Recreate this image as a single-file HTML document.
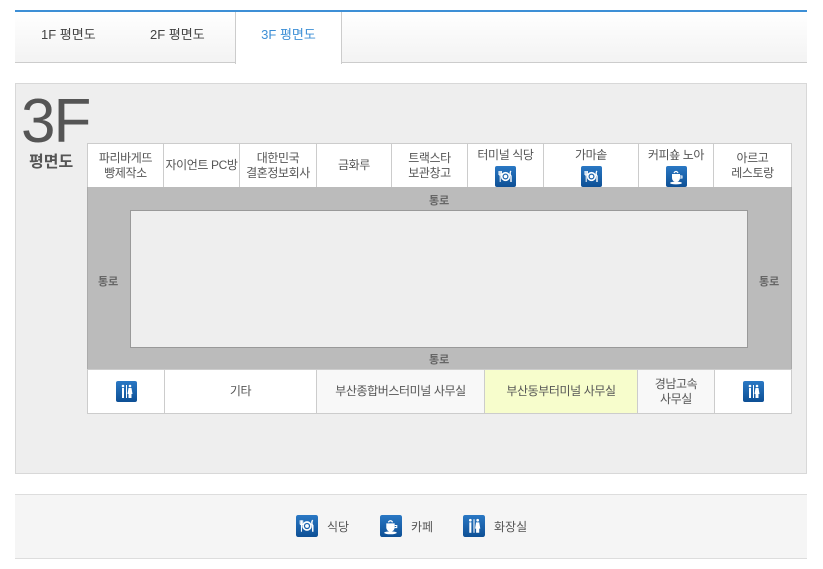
<!DOCTYPE html>
<html><head><meta charset="utf-8"><style>
*{margin:0;padding:0;box-sizing:border-box}
body{width:823px;height:569px;background:#fff;position:relative;font-family:"Liberation Sans","Noto Sans CJK KR",sans-serif;color:#555;overflow:hidden}
.abs{position:absolute}
.tabs{left:15px;top:10px;width:792px;height:53px;border-top:2px solid #3d8fd6;background:linear-gradient(#fff,#f3f3f3);border-bottom:1px solid #ccc}
.tab{position:absolute;top:0;height:51px;line-height:46px;font-size:13px;color:#444}
.tab.on{left:220px;width:107px;height:52px;background:#fff;border-left:1px solid #ccc;border-right:1px solid #ccc;color:#3d8fd6;text-align:center}
.panel{left:15px;top:83px;width:792px;height:391px;background:#eee;border:1px solid #d8d8d8}
.row{position:absolute;left:87px;width:705px;display:flex;background:#fff;border:1px solid #ccc}
.row div{border-right:1px solid #ccc;display:flex;flex-direction:column;align-items:center;justify-content:center;font-size:12px;color:#555;text-align:center;line-height:15px;white-space:nowrap;letter-spacing:-0.4px}
.row div:last-child{border-right:none}
.ic{width:21px;height:21px;display:block}
.lbl{font-size:11px;color:#666;font-weight:bold}
</style></head><body>
<svg width="0" height="0" style="position:absolute">
<defs>
<linearGradient id="g" x1="0" y1="0" x2="0" y2="1"><stop offset="0" stop-color="#2a78c4"/><stop offset="1" stop-color="#0d4f95"/></linearGradient>
<symbol id="food" viewBox="0 0 21 21"><rect width="21" height="21" rx="2" fill="url(#g)"/><path d="M4 5v4M5.2 5v11M6.4 5v4M4 9h2.4" stroke="#fff" stroke-width="1" fill="none"/><circle cx="10.5" cy="10.5" r="3.8" fill="none" stroke="#fff" stroke-width="1.6"/><circle cx="10.5" cy="10.5" r="1.8" fill="#fff"/><path d="M16 5c-1.2 1-1.2 4 0 5v6" stroke="#fff" stroke-width="1.4" fill="none"/></symbol>
<symbol id="cafe" viewBox="0 0 21 21"><rect width="21" height="21" rx="2" fill="url(#g)"/><path d="M6 8h8v4a4 4 0 0 1-8 0z" fill="#fff"/><path d="M14 10h2v2h-2" stroke="#fff" fill="none"/><ellipse cx="10" cy="17" rx="6" ry="1.4" fill="#fff"/><path d="M8 7c1-2 3-2 4 0" stroke="#fff" stroke-width="1.2" fill="none"/></symbol>
<symbol id="wc" viewBox="0 0 21 21"><rect width="21" height="21" rx="2" fill="url(#g)"/><circle cx="7" cy="5" r="1.3" fill="#fff"/><rect x="6" y="7" width="2" height="10" fill="#fff"/><rect x="10" y="4" width="1" height="13" fill="#fff"/><circle cx="14" cy="5" r="1.3" fill="#fff"/><path d="M12.5 7h3l1 6h-1v4h-3v-4h-1z" fill="#fff"/></symbol>
</defs></svg>

<div class="abs tabs">
 <div class="tab" style="left:26px">1F 평면도</div>
 <div class="tab" style="left:135px">2F 평면도</div>
 <div class="tab on">3F 평면도</div>
</div>

<div class="abs panel"></div>
<div class="abs" style="left:21px;top:89px;font-size:62px;color:#555;line-height:66px;letter-spacing:-2px">3F</div>
<div class="abs" style="left:29px;top:148px;font-size:16px;font-weight:bold;color:#555">평면도</div>

<div class="row" style="top:143px;height:45px">
 <div style="width:76px">파리바게뜨<br>빵제작소</div>
 <div style="width:76px">자이언트 PC방</div>
 <div style="width:77px">대한민국<br>결혼정보회사</div>
 <div style="width:75px">금화루</div>
 <div style="width:76px">트랙스타<br>보관창고</div>
 <div style="width:76px;justify-content:flex-start;padding-top:4px">터미널 식당<svg class="ic" style="margin-top:3px"><use href="#food"/></svg></div>
 <div style="width:95px;justify-content:flex-start;padding-top:4px">가마솥<svg class="ic" style="margin-top:3px"><use href="#food"/></svg></div>
 <div style="width:75px;justify-content:flex-start;padding-top:4px">커피숖 노아<svg class="ic" style="margin-top:3px"><use href="#cafe"/></svg></div>
 <div style="flex:1">아르고<br>레스토랑</div>
</div>

<div class="abs" style="left:87px;top:187px;width:705px;height:183px;background:#bbb;border-left:1px solid #aaa;border-right:1px solid #aaa"></div>
<div class="abs" style="left:130px;top:210px;width:618px;height:138px;background:#eee;border:1px solid #999"></div>
<div class="abs lbl" style="left:429px;top:192px">통로</div>
<div class="abs lbl" style="left:429px;top:351px">통로</div>
<div class="abs lbl" style="left:98px;top:273px">통로</div>
<div class="abs lbl" style="left:759px;top:273px">통로</div>

<div class="row" style="top:369px;height:45px">
 <div style="width:77px"><svg class="ic"><use href="#wc"/></svg></div>
 <div style="width:152px">기타</div>
 <div style="width:168px;background:#f8f8f8">부산종합버스터미널 사무실</div>
 <div style="width:153px;background:#f7fdcc">부산동부터미널 사무실</div>
 <div style="width:77px;background:#f8f8f8">경남고속<br>사무실</div>
 <div style="flex:1"><svg class="ic"><use href="#wc"/></svg></div>
</div>

<div class="abs" style="left:15px;top:494px;width:792px;height:65px;background:#f5f5f5;border-top:1px solid #ddd;border-bottom:1px solid #ddd"></div>
<svg class="abs" style="left:296px;top:515px;width:22px;height:22px"><use href="#food"/></svg>
<div class="abs" style="left:327px;top:518px;font-size:12px;color:#555">식당</div>
<svg class="abs" style="left:380px;top:515px;width:22px;height:22px"><use href="#cafe"/></svg>
<div class="abs" style="left:411px;top:518px;font-size:12px;color:#555">카페</div>
<svg class="abs" style="left:463px;top:515px;width:22px;height:22px"><use href="#wc"/></svg>
<div class="abs" style="left:494px;top:518px;font-size:12px;color:#555">화장실</div>
</body></html>
